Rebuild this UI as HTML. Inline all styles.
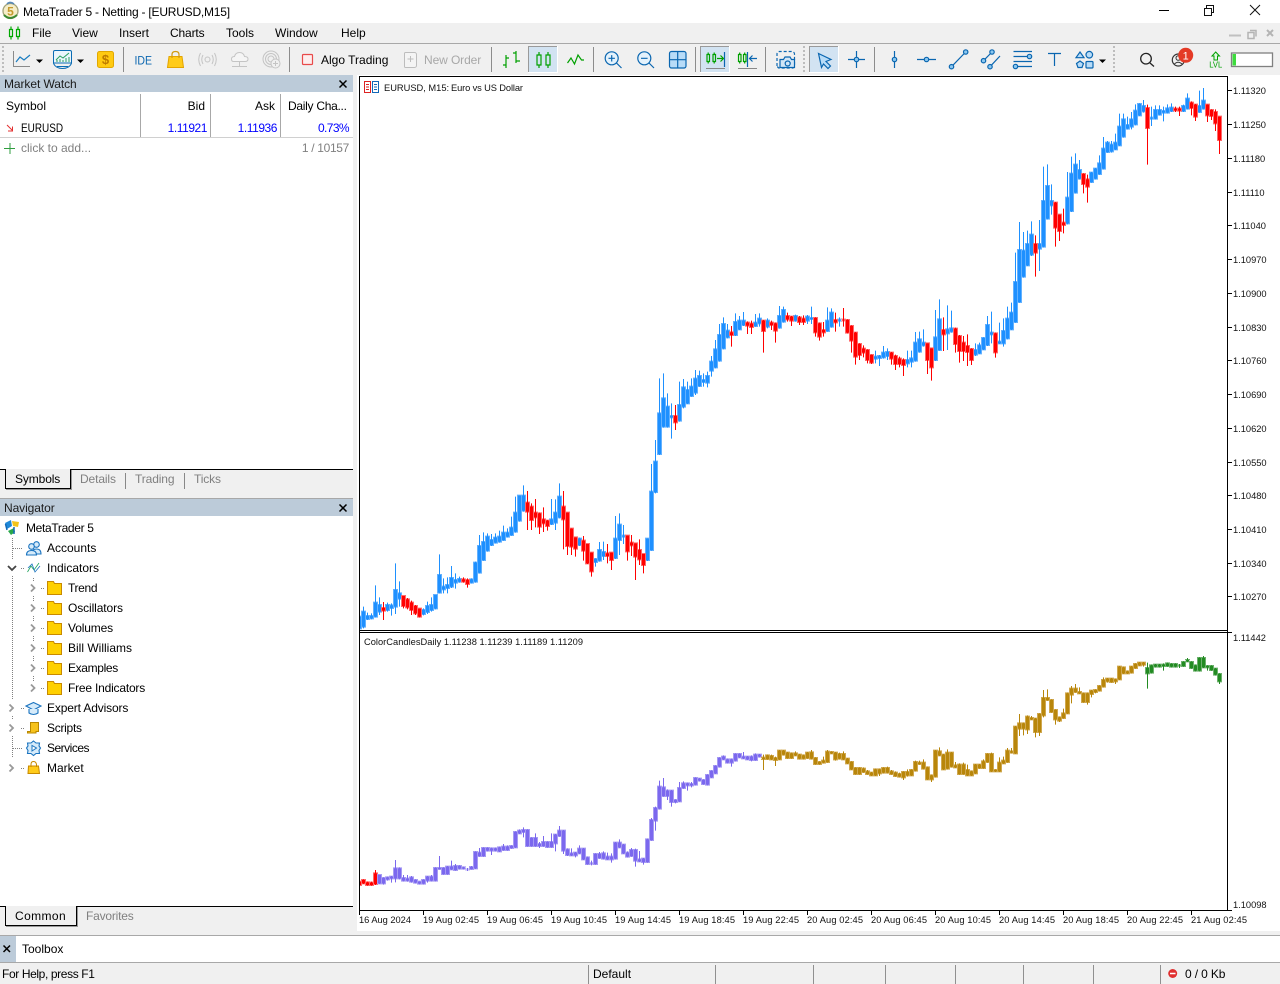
<!DOCTYPE html>
<html lang="en"><head><meta charset="utf-8"><title>MetaTrader 5</title>
<style>
html,body{margin:0;padding:0;width:1280px;height:984px;overflow:hidden;background:#f0f0f0}
body{position:relative;font:12px/16px "Liberation Sans",Arial,sans-serif;color:#000}
.b{position:absolute}
.t{position:absolute;white-space:pre;line-height:16px;height:16px}
.r{text-align:right}
.g{color:#808080}
svg{position:absolute;left:0;top:0}
svg text{font-family:"Liberation Sans",Arial,sans-serif}
</style></head><body>
<div class="b" style="left:0;top:0;width:1280px;height:23px;background:#fff"></div>
<div class="b" style="left:0;top:43px;width:1280px;height:1px;background:#a8a8a8"></div>
<div class="b" style="left:0;top:75px;width:353px;height:17px;background:#bccbd9"></div>
<div class="b" style="left:0;top:92px;width:353px;height:377px;background:#fff"></div>
<div class="b" style="left:0;top:469px;width:353px;height:1px;background:#000"></div>
<div class="b" style="left:0;top:498px;width:353px;height:1px;background:#a8a8a8"></div>
<div class="b" style="left:0;top:499px;width:353px;height:17px;background:#bccbd9"></div>
<div class="b" style="left:0;top:516px;width:353px;height:390px;background:#fff"></div>
<div class="b" style="left:0;top:906px;width:353px;height:1px;background:#000"></div>
<div class="b" style="left:5px;top:469px;width:64px;height:19px;background:#f0f0f0;border:solid #000;border-width:0 1px 1px 1px;box-shadow:1px 1px 0 #999"></div>
<div class="b" style="left:5px;top:906px;width:70px;height:19px;background:#f0f0f0;border:solid #000;border-width:0 1px 1px 1px;box-shadow:1px 1px 0 #999"></div>
<div class="b" style="left:357px;top:75px;width:923px;height:856px;background:#fff"></div>
<div class="b" style="left:0;top:935px;width:1280px;height:1px;background:#a8a8a8"></div>
<div class="b" style="left:0;top:936px;width:1280px;height:26px;background:#fff"></div>
<div class="b" style="left:0;top:936px;width:16px;height:26px;background:#bccbd9"></div>
<div class="b" style="left:0;top:962px;width:1280px;height:1px;background:#a8a8a8"></div>

<div class="t" style="left:23px;top:4px;letter-spacing:-.22px">MetaTrader 5 - Netting - [EURUSD,M15]</div>
<div class="t" style="left:32px;top:25px">File</div>
<div class="t" style="left:72px;top:25px">View</div>
<div class="t" style="left:119px;top:25px">Insert</div>
<div class="t" style="left:170px;top:25px;letter-spacing:-.15px">Charts</div>
<div class="t" style="left:226px;top:25px">Tools</div>
<div class="t" style="left:275px;top:25px">Window</div>
<div class="t" style="left:341px;top:25px">Help</div>
<div class="t" style="left:321px;top:52px">Algo Trading</div>
<div class="t g" style="left:424px;top:52px;color:#a8a8a8;letter-spacing:-.1px">New Order</div>
<div class="t" style="left:4px;top:76px;color:#1a1a1a;letter-spacing:-.08px">Market Watch</div>
<div class="t" style="left:6px;top:98px">Symbol</div>
<div class="t r" style="left:140px;top:98px;width:65px">Bid</div>
<div class="t r" style="left:210px;top:98px;width:65px">Ask</div>
<div class="t" style="left:288px;top:98px;letter-spacing:-.28px">Daily Cha...</div>
<div class="t" style="left:21px;top:120px;transform:scaleX(.83);transform-origin:left center">EURUSD</div>
<div class="t r" style="left:140px;top:120px;width:67px;color:#0000ff;letter-spacing:-.45px">1.11921</div>
<div class="t r" style="left:210px;top:120px;width:67px;color:#0000ff;letter-spacing:-.45px">1.11936</div>
<div class="t r" style="left:280px;top:120px;width:69px;color:#0000ff;letter-spacing:-.6px">0.73%</div>
<div class="t g" style="left:21px;top:140px">click to add...</div>
<div class="t r g" style="left:280px;top:140px;width:69px;letter-spacing:-.33px">1 / 10157</div>
<div class="t" style="left:15px;top:471px;letter-spacing:-.12px">Symbols</div>
<div class="t g" style="left:80px;top:471px;letter-spacing:-.12px">Details</div>
<div class="t g" style="left:135px;top:471px;letter-spacing:-.12px">Trading</div>
<div class="t g" style="left:194px;top:471px;letter-spacing:-.15px">Ticks</div>
<div class="t" style="left:4px;top:500px;color:#1a1a1a;letter-spacing:-.08px">Navigator</div>
<div class="t" style="left:26px;top:520px;letter-spacing:-.33px">MetaTrader 5</div>
<div class="t" style="left:47px;top:540px">Accounts</div>
<div class="t" style="left:47px;top:560px">Indicators</div>
<div class="t" style="left:68px;top:580px;letter-spacing:-.35px">Trend</div>
<div class="t" style="left:68px;top:600px;letter-spacing:-.1px">Oscillators</div>
<div class="t" style="left:68px;top:620px;letter-spacing:-.15px">Volumes</div>
<div class="t" style="left:68px;top:640px">Bill Williams</div>
<div class="t" style="left:68px;top:660px;letter-spacing:-.35px">Examples</div>
<div class="t" style="left:68px;top:680px;letter-spacing:-.2px">Free Indicators</div>
<div class="t" style="left:47px;top:700px;letter-spacing:-.14px">Expert Advisors</div>
<div class="t" style="left:47px;top:720px;letter-spacing:-.28px">Scripts</div>
<div class="t" style="left:47px;top:740px;letter-spacing:-.5px">Services</div>
<div class="t" style="left:47px;top:760px">Market</div>
<div class="t" style="left:15px;top:908px;letter-spacing:.4px">Common</div>
<div class="t g" style="left:86px;top:908px;letter-spacing:-.2px">Favorites</div>
<div class="t" style="left:22px;top:941px">Toolbox</div>
<div class="t" style="left:2px;top:966px;letter-spacing:-.38px">For Help, press F1</div>
<div class="t" style="left:593px;top:966px">Default</div>
<div class="t" style="left:1185px;top:966px;letter-spacing:-.14px">0 / 0 Kb</div>

<svg width="1280" height="984" viewBox="0 0 1280 984" fill="none">
<defs>
<clipPath id="c1"><rect x="360" y="77" width="867" height="553"/></clipPath>
<clipPath id="c2"><rect x="360" y="633" width="867" height="277"/></clipPath>
<g id="bb">
<path transform="translate(360.17,360) scale(.33333)" d="M-2 770V805M10 755V800M22 768V777M34 768V775M46 728V770M58 735V755M82 735V750M94 736V744M106 690V740M118 700V716M190 750V762M202 738V756M214 735V750M226 705V745M238 645V698M250 680V688M262 675V684M274 654V680M286 660V668M298 657V665M334 658V668M346 608V665M358 558V638M370 546V600M382 530V572M394 540V555M406 533V548M418 530V545M430 518V540M442 518V530M454 503V525M466 458V515M478 407V482M490 407V452M574 478V492M586 458V488M598 410V472M658 536V555M706 597V606M718 570V602M730 576V588M766 536V594M778 494V540M790 527V530M862 536V600M874 395V570M886 305V396M898 160V282M910 115V200M922 140V200M934 168V172M958 135V182"/>
<path transform="translate(680.17,280) scale(.33333)" d="M10 322V380M22 330V370M34 320V348M46 296V338M58 288V318M70 300V306M82 288V308M94 245V272M106 208V262M118 165V242M130 132V205M142 152V172M166 126V165M178 122V148M190 122V135M226 128V138M238 116V130M262 122V140M298 108V143M310 90V125M346 108V122M382 110V122M394 114V117M442 122V153M454 98V140M478 119V122M586 230V236M598 228V234M610 218V232M622 216V228M682 240V250M694 235V245M706 188V242M718 178V215M730 188V196M766 172V240M778 118V210M802 148V160M814 145V155M886 210V224M898 196V220M910 174V208M922 135V195M934 158V163M958 185V190M970 153V190M982 116V175M994 98V148"/>
<path transform="translate(1000.17,76) scale(.33333)" d="M46 618V738M58 522V678M70 524V602M82 504V568M94 476V536M118 504V518M130 375V512M142 330V428M154 375V388M202 365V442M214 293V405M226 266V350M238 282V308M274 290V318M286 278V308M298 262V294M310 218V278M322 200V228M334 206V226M346 200V220M358 152V208M370 130V182M382 147V158M394 130V152M406 104V145M418 84V118M430 90V106M454 125V128M466 102V128M478 102V116M490 105V110M502 97V110M514 95V105M550 90V105M562 68V98M598 90V108M610 74V98"/>
</g>
<g id="bw" stroke-width="3">
<path transform="translate(360.17,360) scale(.33333)" d="M-2 760V810M10 740V805M22 758V780M34 760V778M46 676V772M58 712V765M82 728V755M94 730V767M106 610V762M118 664V740M190 745V766M202 725V762M214 712V755M226 705V748M238 583V700M250 655V700M262 652V700M274 618V684M286 640V686M298 650V668M334 655V670M346 605V668M358 525V640M370 517V602M382 520V575M394 522V558M406 520V550M418 512V548M430 497V542M442 505V532M454 470V527M466 410V518M478 407V485M490 376V455M574 417V495M586 418V510M598 370V475M658 533V558M706 595V620M718 546V605M730 545V600M766 468V597M778 460V585M790 495V552M862 535V603M874 312V572M886 240V400M898 55V285M910 40V203M922 100V203M934 130V236M958 65V185"/>
<path transform="translate(680.17,280) scale(.33333)" d="M10 297V385M22 305V372M34 295V350M46 270V345M58 272V320M70 280V320M82 275V322M94 228V290M106 180V265M118 132V245M130 112V208M142 132V175M166 100V168M178 108V150M190 96V138M226 102V140M238 100V140M262 115V145M298 78V146M310 80V128M346 104V125M382 105V132M394 80V132M442 82V155M454 85V143M478 112V140M586 212V250M598 225V258M610 198V236M622 205V240M682 212V262M694 212V262M706 156V245M718 155V218M730 148V200M766 90V243M778 58V212M802 76V210M814 92V158M886 190V228M898 188V222M910 172V210M922 108V198M934 95V190M958 128V192M970 115V200M982 80V178M994 68V150"/>
<path transform="translate(1000.17,76) scale(.33333)" d="M46 530V740M58 438V680M70 468V605M82 464V570M94 436V540M118 432V585M130 272V514M142 265V430M154 325V416M202 288V445M214 242V408M226 232V352M238 252V310M274 288V320M286 276V310M298 238V296M310 183V280M322 195V230M334 195V230M346 173V222M358 113V210M370 113V185M382 122V160M394 108V160M406 85V148M418 82V120M430 72V110M454 92V150M466 88V130M478 88V118M490 92V136M502 85V112M514 82V108M550 86V108M562 52V100M598 44V110M610 36V100"/>
</g>
<g id="rb">
<path transform="translate(360.17,360) scale(.33333)" d="M70 744V752M130 708V738M142 718V742M154 728V750M166 738V760M178 746V770M310 658V665M322 660V672M502 428V455M514 440V480M526 458V472M538 460V500M550 478V490M562 482V498M610 440V478M622 458V558M634 506V560M646 532V566M670 542V572M682 552V610M694 578V634M742 580V588M754 578V600M802 527V574M814 548V556M826 550V590M838 570V598M850 582V615M946 168V187"/>
<path transform="translate(680.17,280) scale(.33333)" d="M154 157V165M202 128V137M214 131V141M250 122V153M274 128V135M286 130V152M322 108V118M334 110V122M358 112V126M370 116V126M406 114V157M418 130V170M430 150V157M466 120V127M490 119V121M502 120V158M514 138V182M526 158V230M538 192V225M550 206V218M562 210V240M574 225V248M634 218V236M646 228V252M658 236V252M670 240V255M742 190V240M754 205V262M790 150V163M826 146V192M838 168V213M850 188V213M862 198V216M874 207V240M946 160V217"/>
<path transform="translate(1000.17,76) scale(.33333)" d="M106 504V530M166 380V455M178 416V465M190 440V447M250 294V324M262 310V332M442 96V156M526 98V103M538 98V104M574 80V96M586 86V122M622 86V118M634 102V120M646 108V142M658 122V192"/>
</g>
<g id="rw" stroke-width="3">
<path transform="translate(360.17,360) scale(.33333)" d="M70 726V780M130 708V745M142 714V748M154 722V765M166 735V765M178 746V772M310 652V668M322 655V683M502 393V510M514 430V510M526 417V502M538 458V522M550 442V516M562 480V512M610 393V568M622 458V585M634 505V585M646 532V590M670 528V602M682 552V612M694 578V650M742 552V610M754 578V630M802 527V602M814 525V588M826 550V660M838 538V615M850 582V640M946 135V210"/>
<path transform="translate(680.17,280) scale(.33333)" d="M154 138V200M202 124V162M214 122V162M250 120V218M274 122V150M286 128V188M322 98V125M334 108V138M358 108V135M370 106V135M406 112V170M418 128V182M430 126V170M466 98V155M490 84V140M502 118V160M514 136V218M526 156V254M538 190V240M550 196V232M562 208V250M574 224V252M634 216V254M646 224V270M658 230V262M670 235V288M742 190V282M754 205V302M790 112V213M826 143V218M838 165V248M850 168V243M862 163V258M874 205V255M946 158V233"/>
<path transform="translate(1000.17,76) scale(.33333)" d="M106 478V602M166 378V512M178 416V495M190 398V472M250 292V352M262 296V380M442 86V266M526 92V108M538 92V120M574 76V118M586 84V135M622 85V138M634 100V132M646 100V165M658 122V234"/>
</g>
<path id="sr" transform="translate(360.17,740) scale(.33333)" d="M-2 425V435M10 420V430M22 427V435M34 428V435M46 400V432"/>
<path id="srw" transform="translate(360.17,740) scale(.33333)" stroke-width="3" d="M-2 420V442M10 418V432M22 425V437M34 425V437M46 390V435"/>
<path id="pb" transform="translate(360.17,740) scale(.33333)" d="M58 405V430M70 414V430M82 412V418M94 410V415M106 385V415M118 385V415M130 414V422M142 416V422M154 412V425M166 420V428M178 425V431M190 420V431M202 410V422M214 410V422M226 384V422M238 384V387M250 384V402M262 380V402M274 380V388M286 378V390M298 378V386M310 382V386M322 387V388M334 381V387M346 336V385M358 338V348M370 324V348M382 324V332M394 325V332M406 325V332M418 322V334M430 320V330M442 320V330M454 318V324M466 276V322M478 272V280M490 270V276M502 270V318M514 294V318M526 294V318M538 312V318M550 306V318M562 306V321M574 306V321M586 284V310M598 272V288M610 272V332M622 328V345M634 340V346M646 338V346M658 326V340M670 326V358M682 352V372M694 370V372M706 342V372M718 342V354M730 340V356M742 350V358M754 350V358M766 308V356M778 308V322M790 314V340M802 338V350M814 330V348M826 330V362M838 358V364M850 356V366M862 298V366M874 240V300M886 204V242M898 140V206M910 142V168M922 152V168M934 152V186M946 180V186M958 144V184M970 130V144M982 130V136M994 132V136M1006 114V134M1018 116V122M1030 120V132M1042 105V134M1054 93V112M1066 78V100M1078 54V80M1090 50V58M1102 58V68M1114 58V68M1126 42V62M1138 42V52M1150 50V55M1162 50V58M1174 50V60M1186 44V60M1198 44V50"/>
<path id="pw" transform="translate(360.17,740) scale(.33333)" stroke-width="3" d="M58 405V432M70 412V434M82 410V422M94 408V428M106 360V427M118 382V418M130 405V424M142 405V425M154 408V428M166 418V430M178 424V433M190 418V433M202 408V428M214 405V424M226 382V424M238 348V388M250 382V404M262 378V404M274 362V390M286 372V392M298 376V388M310 380V388M322 384V393M334 378V388M346 334V387M358 324V350M370 322V350M382 322V334M394 323V345M406 323V334M418 320V336M430 312V332M442 316V332M454 316V326M466 274V324M478 268V282M490 262V292M502 268V320M514 292V320M526 280V320M538 306V324M550 288V320M562 304V323M574 280V323M586 282V334M598 258V290M610 270V342M622 325V348M634 325V348M646 336V352M658 316V342M670 324V360M682 350V374M694 362V376M706 340V374M718 336V356M730 334V358M742 338V360M754 340V368M766 306V358M778 298V324M790 312V342M802 334V352M814 324V350M826 326V380M838 333V366M850 354V374M862 296V368M874 234V302M886 200V272M898 122V208M910 114V170M922 148V180M934 150V200M946 178V190M958 126V186M970 124V146M982 128V152M994 126V142M1006 112V136M1018 114V124M1030 118V134M1042 103V136M1054 91V114M1066 76V102M1078 52V82M1090 46V60M1102 56V70M1114 56V80M1126 40V64M1138 40V54M1150 36V57M1162 48V60M1174 46V64M1186 40V62M1198 42V52"/>
<g id="gb">
<path transform="translate(360.17,740) scale(.33333)" d="M1210 53V57M1222 46V57M1234 48V58M1246 54V60M1258 32V58"/>
<path transform="translate(780.17,630) scale(.33333)" d="M10 362V374M22 368V384M34 370V384M46 370V376M58 374V386M70 376V386M82 368V384M94 367V386M106 384V402M118 396V402M130 392V398M142 365V396M154 366V370M166 368V388M178 372V386M190 372V388M202 386V400M214 396V418M226 414V432M238 414V432M250 416V426M262 424V432M274 428V436M286 418V436M298 418V430M310 414V428M322 414V428M334 424V432M346 428V438M358 432V440M370 426V442M382 426V436M394 420V436M406 396V422M418 398V402M430 398V416M442 412V448M454 436V448M466 362V440M478 364V376M490 374V418M502 368V416M514 368V410M526 406V412M538 404V432M550 404V432M562 420V436M574 424V436M586 404V430M598 404V414M610 394V414M622 372V396M634 372V424M646 420V424M658 398V424M670 392V400M682 362V396M694 364V368M706 290V370M718 280V296M730 280V296M742 260V298M754 264V268M766 266V306M778 252V306M790 204V256M802 204V210M814 210V246M826 240V268M838 262V272M850 250V264M862 190V250M874 176V194M886 176V186M898 186V190M910 190V216M922 190V216M934 182V192M946 180V186M958 168V182M970 150V170M982 146V154M994 146V156M1006 148V154M1018 110V148M1030 112V130M1042 124V130M1054 110V128M1066 102V114M1078 98V106M1090 98V104"/>
</g>
<g id="gw" stroke-width="3">
<path transform="translate(360.17,740) scale(.33333)" d="M1210 44V90M1222 44V59M1234 44V60M1246 50V78M1258 30V60"/>
<path transform="translate(780.17,630) scale(.33333)" d="M10 360V376M22 366V386M34 368V386M46 364V378M58 372V388M70 374V388M82 366V386M94 360V388M106 382V404M118 394V404M130 380V400M142 360V398M154 364V372M166 366V392M178 368V388M190 364V390M202 384V402M214 394V420M226 412V434M238 412V434M250 412V428M262 420V434M274 426V438M286 416V438M298 416V438M310 412V430M322 410V430M334 420V434M346 424V440M358 428V442M370 424V450M382 418V440M394 418V438M406 392V424M418 392V404M430 388V418M442 410V450M454 434V456M466 360V442M478 352V378M490 372V420M502 358V418M514 366V412M526 396V414M538 400V434M550 398V434M562 404V438M574 422V438M586 402V432M598 402V416M610 388V416M622 370V398M634 368V426M646 418V426M658 382V426M670 380V402M682 354V398M694 354V370M706 288V372M718 252V318M730 278V316M742 256V312M754 258V270M766 264V322M778 250V318M790 180V262M802 178V212M814 208V248M826 238V284M838 260V276M850 236V266M862 188V252M874 168V220M886 162V188M898 172V192M910 188V218M922 188V224M934 180V202M946 178V190M958 166V184M970 142V172M982 144V158M994 144V158M1006 146V162M1018 108V150M1030 110V132M1042 122V132M1054 108V130M1066 100V116M1078 96V108M1090 96V110"/>
</g>
<path id="ngb" transform="translate(780.17,630) scale(.33333)" d="M1102 114V130M1114 106V128M1126 104V110M1138 104V110M1150 104V108M1162 100V108M1174 102V110M1186 102V110M1198 106V108M1210 96V108M1222 90V94M1234 96V114M1246 106V122M1258 84V122M1270 84V112M1282 108V112M1294 108V120M1306 116V134M1318 132V154"/>
<path id="ngw" transform="translate(780.17,630) scale(.33333)" stroke-width="3" d="M1102 98V176M1114 104V130M1126 102V112M1138 102V112M1150 100V122M1162 98V110M1174 100V112M1186 100V112M1198 102V114M1210 94V110M1222 84V96M1234 94V116M1246 104V124M1258 82V124M1270 78V114M1282 106V122M1294 106V122M1306 114V136M1318 130V162"/>
</defs>

<!-- main chart -->
<g clip-path="url(#c1)">
<g stroke-width="15" stroke="#63b1ff"><use href="#bb" y="-1"/><use href="#bb" y="1"/></g>
<g stroke-width="15" stroke="#ff6a6a"><use href="#rb" y="-1"/><use href="#rb" y="1"/></g>
<g stroke="#1e90ff" stroke-width="9"><use href="#bw"/><use href="#bb"/></g>
<g stroke="#f00" stroke-width="9"><use href="#rw"/><use href="#rb"/></g>
</g>
<!-- sub chart -->
<g clip-path="url(#c2)">
<g stroke-width="15" stroke="#ff6a6a"><use href="#sr" y="-1"/><use href="#sr" y="1"/></g>
<g stroke-width="15" stroke="#a69bf3"><use href="#pb" y="-1"/><use href="#pb" y="1"/></g>
<g stroke-width="15" stroke="#d0a84f"><use href="#gb" y="-1"/><use href="#gb" y="1"/></g>
<g stroke-width="15" stroke="#6cb06c"><use href="#ngb" y="-1"/><use href="#ngb" y="1"/></g>
<g stroke="#f00" stroke-width="9"><use href="#srw"/><use href="#sr"/></g>
<g stroke="#7b68ee" stroke-width="9"><use href="#pw"/><use href="#pb"/></g>
<g stroke="#b8860b" stroke-width="9"><use href="#gw"/><use href="#gb"/></g>
<g stroke="#228b22" stroke-width="9"><use href="#ngw"/><use href="#ngb"/></g>
</g>

<!-- chart frame -->
<path d="M359.5 76.5H1227.5V910.500H359.500Z" stroke="#000"/>
<path d="M360 630.500H1227M360 632.500H1227" stroke="#000"/>
<path stroke="#000" d="M1228 90.500h4M1228 124.500h4M1228 158.500h4M1228 192.500h4M1228 225.500h4M1228 259.500h4M1228 293.500h4M1228 327.500h4M1228 360.500h4M1228 394.500h4M1228 428.500h4M1228 462.500h4M1228 495.500h4M1228 529.500h4M1228 563.500h4M1228 596.500h4M1228 632.500h4M1228 910.500h4M359.500 911v4M423.500 911v4M487.500 911v4M551.500 911v4M615.500 911v4M679.500 911v4M743.500 911v4M807.500 911v4M871.500 911v4M935.500 911v4M999.500 911v4M1063.500 911v4M1127.500 911v4M1191.500 911v4"/>
<g fill="#111" font-size="9.300px">
<g transform="translate(0,-.5)"><text x="1233" y="94.500">1.11320</text><text x="1233" y="128.500">1.11250</text><text x="1233" y="162.500">1.11180</text><text x="1233" y="196.500">1.11110</text><text x="1233" y="229.500">1.11040</text><text x="1233" y="263.500">1.10970</text><text x="1233" y="297.500">1.10900</text><text x="1233" y="331.500">1.10830</text><text x="1233" y="364.500">1.10760</text><text x="1233" y="398.500">1.10690</text><text x="1233" y="432.500">1.10620</text><text x="1233" y="466.500">1.10550</text><text x="1233" y="499.500">1.10480</text><text x="1233" y="533.500">1.10410</text><text x="1233" y="567.500">1.10340</text><text x="1233" y="600.500">1.10270</text><text x="1233" y="641.500">1.11442</text><text x="1233" y="908.500">1.10098</text></g>
<text x="359" y="923" textLength="52">16 Aug 2024</text><text x="423" y="923" textLength="56">19 Aug 02:45</text><text x="487" y="923" textLength="56">19 Aug 06:45</text><text x="551" y="923" textLength="56">19 Aug 10:45</text><text x="615" y="923" textLength="56">19 Aug 14:45</text><text x="679" y="923" textLength="56">19 Aug 18:45</text><text x="743" y="923" textLength="56">19 Aug 22:45</text><text x="807" y="923" textLength="56">20 Aug 02:45</text><text x="871" y="923" textLength="56">20 Aug 06:45</text><text x="935" y="923" textLength="56">20 Aug 10:45</text><text x="999" y="923" textLength="56">20 Aug 14:45</text><text x="1063" y="923" textLength="56">20 Aug 18:45</text><text x="1127" y="923" textLength="56">20 Aug 22:45</text><text x="1191" y="923" textLength="56">21 Aug 02:45</text>
<text x="384" y="91">EURUSD, M15:</text><text x="451" y="91" textLength="72">Euro vs US Dollar</text>
<text x="364" y="645" textLength="219">ColorCandlesDaily 1.11238 1.11239 1.11189 1.11209</text>
</g>
<!-- chart symbol icon -->
<rect x="364.500" y="81.500" width="6" height="11" stroke="#d22" fill="#fff"/><path d="M366 84.500h3M366 87h3M366 89.500h3" stroke="#d22"/>
<rect x="372.500" y="81.500" width="6" height="11" stroke="#1268b8" fill="#fff"/><path d="M374 84.500h3M374 87h3M374 89.500h3" stroke="#1268b8"/>

<!-- window buttons -->
<path d="M1159 10.500h10" stroke="#000"/>
<path d="M1204.500 8.500h7v7h-7zM1206.500 8V5.500h7v7H1212" stroke="#111"/>
<path d="M1250 5l10 10M1260 5l-10 10" stroke="#111"/>
<!-- app icon -->
<circle cx="10.500" cy="11" r="7.500" fill="#f6eec8" stroke="#a3a37a" stroke-width="1.300"/>
<path d="M4 15Q10 21 17 15" stroke="#3d8a33" stroke-width="2"/>
<path d="M7 4Q10 1 14 4" stroke="#5a8ab8" stroke-width="1.600"/>
<text x="10.500" y="15.500" text-anchor="middle" font-size="12" font-weight="bold" fill="#c49a2c">5</text>
<!-- menu icon -->
<path d="M9.500 29.500h3v7h-3zM16.500 29.500h3v7h-3zM11 26.500v3M11 36.500v3M18 26.500v3M18 36.500v3" stroke="#00a800" stroke-width="1.200"/>
<!-- MDI buttons -->
<path d="M1229 35.500h12" stroke="#c0c0c0" stroke-width="2"/>
<path d="M1248 32.500h6v6h-6zM1250 30.500h6v6" stroke="#b4b4b4" stroke-width="1.500"/>
<path d="M1267 30l6 6M1273 30l-6 6" stroke="#b4b4b4" stroke-width="2"/>

<!-- grips -->
<g stroke="#bdbdbd" stroke-dasharray="2 2" stroke-width="2">
<path d="M3 46V73"/><path d="M804 46V72"/><path d="M1114 46V72"/>
</g>
<!-- separators -->
<path stroke="#8c8c8c" d="M123.500 47v25M289.500 47v25M491.500 47v25M593.500 47v25M695.500 47v25M765.500 47v25M874.500 47v25"/>
<!-- toolbar left -->
<path d="M13.500 51V66.500H30" stroke="#8a8a8a"/><path d="M16 62L20 57L24 60L30 55" stroke="#1a7cc0" stroke-width="1.200"/>
<path d="M36 59.500h7l-3.500 3.500z" fill="#000"/>
<path d="M55 50.500h15a1.500 1.500 0 0 1 1.500 1.500v11H53.500V52a1.500 1.500 0 0 1 1.500-1.500z" stroke="#0a6cb4" fill="#eaf5fc"/>
<path d="M56 60L60 56L63 58L69 53" stroke="#28a060"/><path d="M57 62v-2M60 62v-3M63 62v-2M66 62v-4M69 62v-5" stroke="#28a060"/>
<path d="M53.500 63.500Q56 68.500 62.500 68.500T71.500 63.500M57 66.500h11" stroke="#0a6cb4"/>
<path d="M77 59.500h7l-3.500 3.500z" fill="#000"/>
<rect x="97.500" y="51.500" width="16" height="16" rx="2" fill="#ffca12" stroke="#e2a800"/>
<text x="105.500" y="64" text-anchor="middle" font-size="13" font-weight="bold" fill="#bd7a00">$</text>
<text x="134.500" y="64.500" font-size="12" fill="#0a66b0" textLength="17.500" lengthAdjust="spacingAndGlyphs">IDE</text>
<path d="M169 56.500H182L183.500 67.500H167.500Z" fill="#ffcb1a" stroke="#e3a400"/><path d="M172 58V54.500Q172 51.500 175.500 51.500T179 54.500V58" stroke="#d09a10" stroke-width="1.200"/>
<g stroke="#c4c4c4">
<circle cx="207.500" cy="59.500" r="2.500"/><path d="M203 55Q200.500 59.500 203 64M212 55Q214.500 59.500 212 64M200.500 53Q197 59.500 200.500 66M214.500 53Q218 59.500 214.500 66"/>
<path d="M236 61.500H233.500Q231.500 61.500 231.500 59T234.500 56.500Q235.500 52.500 239.500 52.500T244.500 56.500Q248 56.500 248 59T245 61.500ZM239.500 61.500V66M232 66.500H247" fill="#f5f5f5"/>
<circle cx="271" cy="59" r="8"/><circle cx="271" cy="59" r="5.500"/><circle cx="271" cy="59" r="3"/><circle cx="275.500" cy="63.500" r="4.500" fill="#f0f0f0"/><path d="M275.500 61v5M273 63.500h5"/>
</g>
<rect x="302.500" y="54.500" width="10" height="10" rx="1" fill="#fdeeee" stroke="#e84a4a" stroke-width="1.200"/>
<path d="M405.500 52.500h9a2 2 0 0 1 2 2v11a2 2 0 0 1-2 2h-9a1 1 0 0 1-1-1v-13a1 1 0 0 1 1-1zM410.500 56v6M407.500 59h6" stroke="#bdbdbd" fill="#f4f4f4"/>
<!-- chart type -->
<path stroke="#00a000" stroke-width="1.200" d="M506 55V68M506 58H509M506 65H503M516 51V63M516 53H513M516 61H520"/>
<rect x="528.500" y="46.500" width="28.500" height="25.500" fill="#d2e3f2"/><path d="M528.500 72V46.500H557" stroke="#9a9a9a"/><path d="M557.500 46v26.500H528" stroke="#fff"/>
<path stroke="#00a000" stroke-width="1.200" d="M537 55h4v10h-4zM546 55h4v10h-4zM539 52v3M539 65v3M548 52v3M548 65v3"/>
<path stroke="#00a000" stroke-width="1.200" d="M567.500 63L571 58L574.500 64L578 55L581.500 60H584"/>
<!-- zoom -->
<g stroke="#0a66b0" stroke-width="1.200">
<circle cx="611.700" cy="58.300" r="6.500" fill="#e4f2fc"/><path d="M608.500 58.300h6.400M611.700 55.100v6.400M616.500 63l5 5"/>
<circle cx="644.300" cy="58.300" r="6.500" fill="#e4f2fc"/><path d="M641 58.300h6.600M649 63l5 5"/>
<rect x="669.500" y="51.500" width="16.500" height="16.500" rx="2" fill="#b8dcf8"/><path d="M677.700 51.500v16.500M669.500 59.700h16.500"/>
</g>
<!-- autoscroll -->
<rect x="700.500" y="46.500" width="28.500" height="25.500" fill="#d2e3f2"/><path d="M700.500 72V46.500H729" stroke="#9a9a9a"/><path d="M729.500 46v26.500H700" stroke="#fff"/>
<path stroke="#00a000" stroke-width="1.200" d="M707 54.500h2.500v7H707zM713 54.500h2.500v7H713zM708.200 52.500v2M708.200 61.500v2M714.200 52.500v2M714.200 61.500v2M717 58.500h6M720.500 55.500l3 3-3 3"/>
<path d="M724.500 52v15" stroke="#0a66b0" stroke-width="1.200"/><path d="M706 68.500h19" stroke="#888"/>
<path stroke="#00a000" stroke-width="1.200" d="M738.500 54.500h2.500v7h-2.500zM743.500 54.500h2.500v7h-2.500zM739.700 52.500v2M739.700 61.500v2M744.700 52.500v2M744.700 61.500v2"/>
<path stroke="#0a66b0" stroke-width="1.200" d="M747.500 52v15M757 58.500h-7M752.500 55.500l-3 3 3 3"/><path d="M738 68.500h19" stroke="#888"/>
<!-- camera -->
<path d="M777 66V54a2.500 2.500 0 0 1 2.500-2.500H792a2.500 2.500 0 0 1 2.500 2.500v12a2 2 0 0 1-2 2h-13.500a2 2 0 0 1-1.500-2z" stroke="#0a66b0" stroke-width="1.200" stroke-dasharray="3 2"/>
<path d="M780 67.500v-8h3.500l1.500-2.500h5l1.500 2.500h3v8z" fill="#d2e6f7" stroke="#0a66b0" stroke-width="1.200"/><circle cx="787.700" cy="63.500" r="2.500" stroke="#0a66b0" stroke-width="1.200"/>
<!-- cursor -->
<rect x="809.500" y="46.500" width="28.500" height="25.500" fill="#d2e3f2"/><path d="M809.500 72V46.500H838" stroke="#9a9a9a"/><path d="M838.500 46v26.500H809" stroke="#fff"/>
<path d="M818.500 53.500L831 59.500L826 61.500L830.500 66L828 68.500L823.500 64L821.500 67.500Z" fill="#b8dcf8" stroke="#0a66b0" stroke-width="1.200"/>
<!-- drawing tools -->
<g stroke="#0a66b0" stroke-width="1.200">
<path d="M848 59.500h17M856.500 51v17"/><circle cx="856.500" cy="59.500" r="2.200" fill="#8cc8f0"/>
<path d="M894.500 51v17"/><circle cx="894.500" cy="59.500" r="2.200" fill="#8cc8f0"/>
<path d="M917 59.500h19"/><circle cx="926.500" cy="59.500" r="2.200" fill="#8cc8f0"/>
<path d="M951.500 66.700L965.700 52"/><circle cx="951.500" cy="66.700" r="2.200" fill="#8cc8f0"/><circle cx="965.700" cy="52" r="2.200" fill="#8cc8f0"/>
<path d="M983.500 60.700L992 52M990 66.700L1000 56"/><circle cx="983.500" cy="60.700" r="2.200" fill="#8cc8f0"/><circle cx="992" cy="52" r="2.200" fill="#8cc8f0"/><circle cx="990" cy="66.700" r="2.200" fill="#8cc8f0"/>
<path d="M1013.500 51.500h18.500M1013.500 56.500h18.500M1013.500 61.500h18.500M1013.500 66.500h18.500"/><circle cx="1029.500" cy="56.500" r="2.200" fill="#8cc8f0"/><circle cx="1015.500" cy="66.500" r="2.200" fill="#8cc8f0"/>
<path d="M1048 53.500h13M1054.500 53.500V66"/>
<path d="M1080 52L1084 57.700H1076Z" fill="#b8dcf8"/><circle cx="1089.300" cy="54.700" r="3.300" fill="#b8dcf8"/><path d="M1080 61L1083.500 63.500L1082 67.500H1078L1076.500 63.500Z" fill="#b8dcf8"/><rect x="1086" y="61.500" width="7" height="6.500" rx="1" fill="#b8dcf8"/>
</g>
<path d="M1099 59.500h7l-3.500 3.500z" fill="#000"/>
<!-- right group -->
<circle cx="1146" cy="58.700" r="5.300" stroke="#222" stroke-width="1.300"/><path d="M1150 63l4 3.500" stroke="#222" stroke-width="1.300"/>
<circle cx="1178.300" cy="60" r="6" stroke="#333" stroke-width="1.200"/><circle cx="1178.300" cy="58" r="2.300" stroke="#333"/><path d="M1174 64.500Q1178 60 1182.500 64.500" stroke="#333"/>
<circle cx="1185.700" cy="55.300" r="7.500" fill="#e43a26"/><text x="1185.700" y="59.500" text-anchor="middle" font-size="11" fill="#fff">1</text>
<path d="M1215.700 52L1219.500 56H1217.500V60H1214V56H1212Z" fill="#e4f8e4" stroke="#00a000"/>
<text x="1215.700" y="67.500" text-anchor="middle" font-size="8.500" fill="#00a000" textLength="13" lengthAdjust="spacingAndGlyphs">LVL</text>
<rect x="1231.500" y="53" width="41" height="13.500" stroke="#808080" stroke-width="1.300" fill="#fff"/>
<rect x="1232.500" y="54" width="3.500" height="11.500" fill="#3ddc3d"/>

<!-- panel closers -->
<path d="M339.500 80.500l7 7M346.500 80.500l-7 7M339.500 504.500l7 7M346.500 504.500l-7 7M3.500 945.500l6.500 6.500M10 945.500l-6.500 6.500" stroke="#000" stroke-width="1.500"/>
<!-- market watch -->
<path stroke="#a8a8a8" d="M140.500 94v43M210.500 94v43M280.500 94v43"/>
<path stroke="#d0d0d0" d="M0 137.500H353"/>
<path d="M7 125l5.500 5.500M12.500 126.500v4.500H8" stroke="#e33030"/>
<path d="M10 143v11M4 148.500h11" stroke="#2f9e3f"/>
<!-- tabs -->
<path stroke="#888" d="M125.500 473v16M184.500 473v16"/>
<!-- status seps -->
<path stroke="#909090" d="M588.500 965v19M715.500 965v19M813.500 965v19M885.500 965v19M955.500 965v19M1023.500 965v19M1093.500 965v19M1160.500 965v19"/>
<circle cx="1172.700" cy="973.500" r="4.500" fill="#e03030"/><path d="M1170 973.500h5.500" stroke="#fff" stroke-width="1.500"/>

<!-- navigator tree -->
<g stroke="#808080" stroke-dasharray="1 1">
<path d="M12.500 538V560M12.500 576V700M12.500 716V720M12.500 736V758M13 548.500H23M13 748.500H23M21 568.500h3M21 708.500h3M21 728.500h3M21 768.500h3M33.500 578V582M33.500 596V602M33.500 616V622M33.500 636V642M33.500 656V662M33.500 676V682M41 588.500h3M41 608.500h3M41 628.500h3M41 648.500h3M41 668.500h3M41 688.500h3"/>
</g>
<path d="M8 566l4 4 4-4" stroke="#444" stroke-width="1.800"/>
<g stroke="#9a9a9a" stroke-width="1.800">
<path d="M31 584.500l3.500 3.500-3.500 3.500M31 604.500l3.500 3.500-3.500 3.500M31 624.500l3.500 3.500-3.500 3.500M31 644.500l3.500 3.500-3.500 3.500M31 664.500l3.500 3.500-3.500 3.500M31 684.500l3.500 3.500-3.500 3.500"/>
<path d="M9.500 704.500l3.500 3.500-3.500 3.500M9.500 724.500l3.500 3.500-3.500 3.500M9.500 764.500l3.500 3.500-3.500 3.500"/>
</g>
<!-- folders -->
<g fill="#ffd000" stroke="#c88a00">
<path d="M47.500 581.500h6l1 2h7v11h-14z"/>
<path d="M47.500 601.500h6l1 2h7v11h-14z"/>
<path d="M47.500 621.500h6l1 2h7v11h-14z"/>
<path d="M47.500 641.500h6l1 2h7v11h-14z"/>
<path d="M47.500 661.500h6l1 2h7v11h-14z"/>
<path d="M47.500 681.500h6l1 2h7v11h-14z"/>
</g>
<!-- mt5 logo -->
<path d="M5 523L11 520L12 526L7 529Z" fill="#1e88d8"/>
<path d="M12 521L19 522L18 527L13 526Z" fill="#f2c31b"/>
<path d="M8 531L14 528L15 532L11 535Z" fill="#2aa84a"/>
<path d="M5.500 524L7 530M14 527V534" stroke="#1268b8" stroke-width="1.500"/>
<!-- accounts -->
<g stroke="#1b74c0" stroke-width="1.100" fill="#d6ebfa">
<circle cx="36.500" cy="544.500" r="2.800"/><path d="M32 554Q32 549 36.500 549T41 554Z"/>
<circle cx="31.500" cy="546.500" r="2.800"/><path d="M26.500 555Q26.500 550.500 31.500 550.500T36.500 555Z"/>
</g>
<!-- indicators -->
<path d="M27.500 572L31 566L34 570L39 563" stroke="#1fa35c" stroke-width=".8"/><path d="M28 568L32 564L35 572L40 566" stroke="#1b74c0" stroke-width=".8"/>
<!-- expert cap -->
<path d="M26 706L33.500 702.500L41 706L33.500 710Z" fill="#d6ebfa" stroke="#1b74c0" stroke-width="1.100"/><path d="M29 709V713Q33.500 716 38 713V709" stroke="#1b74c0" stroke-width="1.100" fill="#d6ebfa"/>
<!-- scripts -->
<path d="M30.500 722.500H38.500V731.500H36V733H27.500V731.500H30.500Z" fill="#f6c21c" stroke="#b98800"/>
<!-- services gear -->
<path d="M33.500 741L36 743L39.500 743L39 746L40.500 748L39 750.500L39.500 753.500L36 753.500L33.500 755.500L31 753.500L27.500 753.500L28 750.500L26.500 748L28 746L27.500 743L31 743Z" fill="#d6ebfa" stroke="#1b74c0" stroke-width="1.100"/><path d="M32 745.500V751L36.500 748Z" stroke="#1b74c0" fill="#fff"/>
<!-- market bag -->
<path d="M28.500 766H38.500L39.500 773.500H28Z" fill="#ffcb1a" stroke="#c88a00"/><path d="M31 767V764.500Q31 761.500 33.500 761.500T36.500 764.500V767" stroke="#c88a00"/>
</svg>
</body></html>
